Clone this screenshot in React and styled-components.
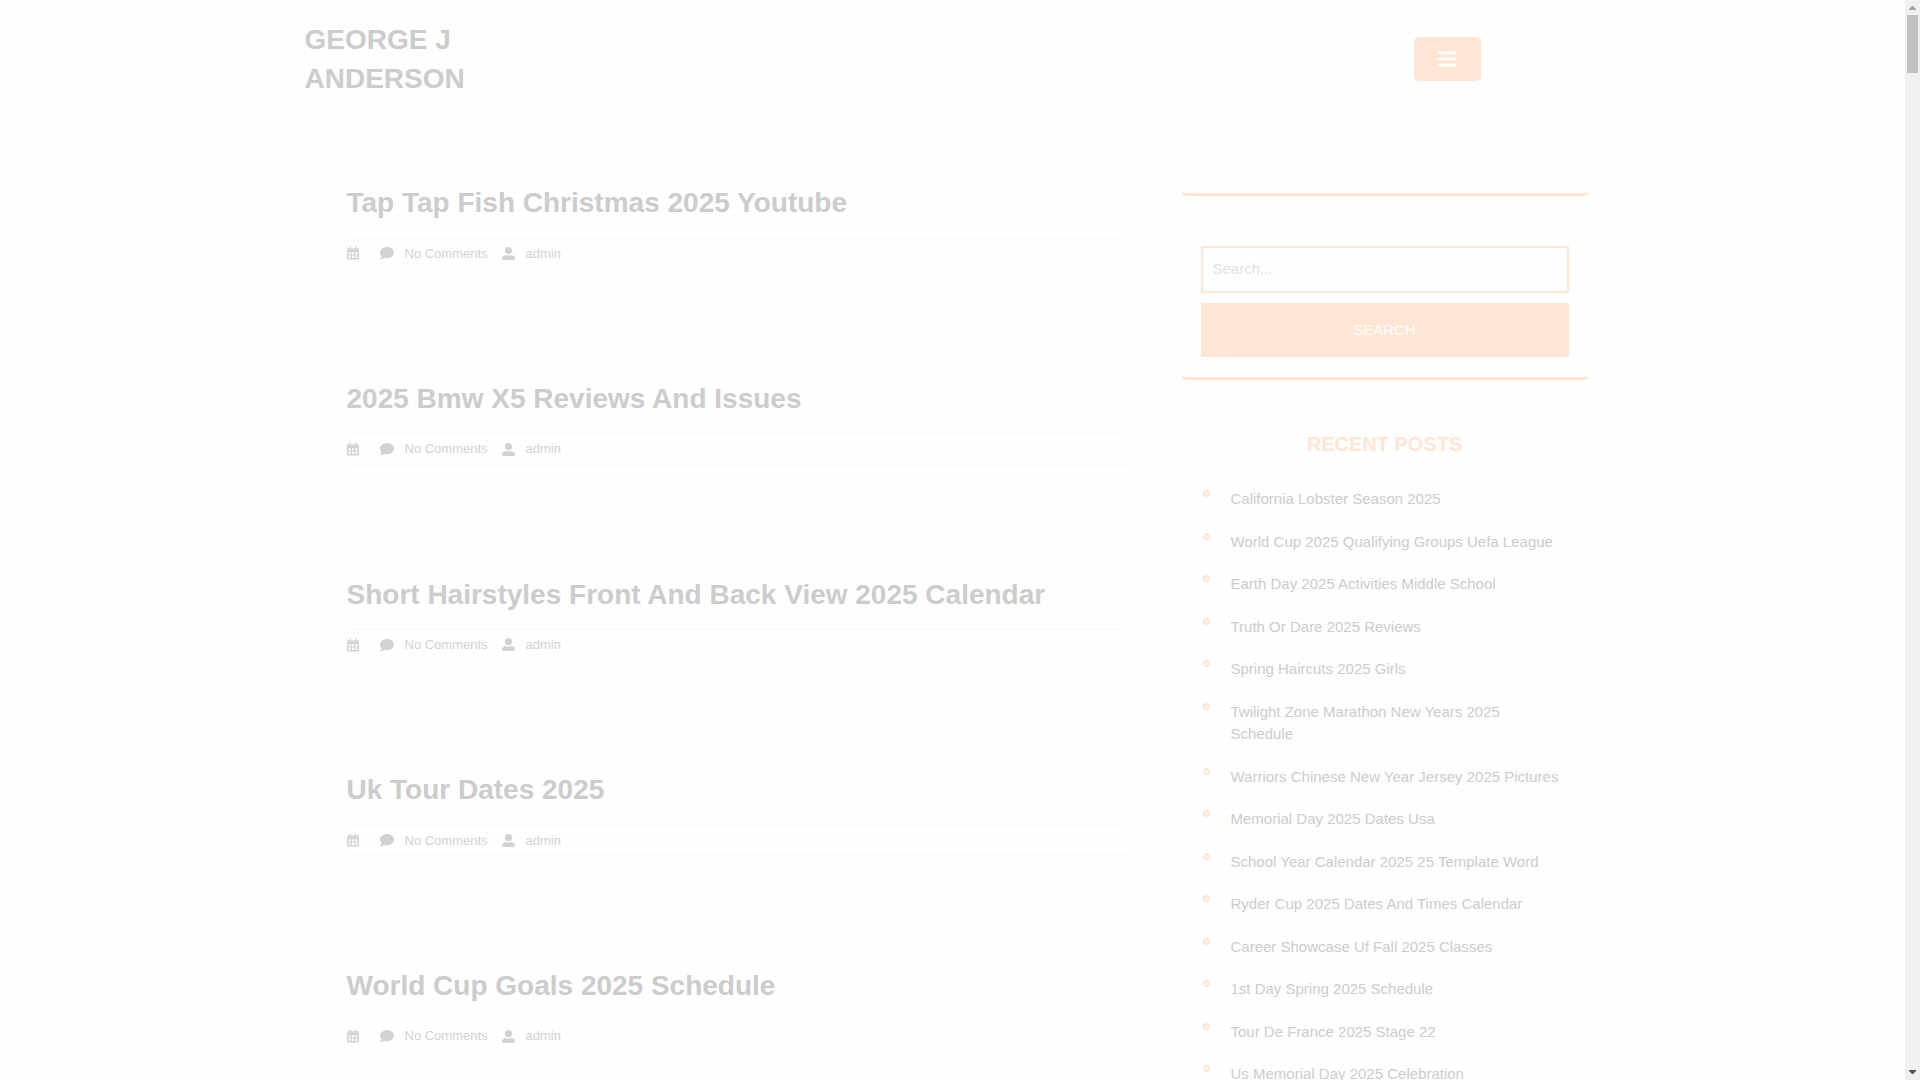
import React from "react";
import styled, { createGlobalStyle } from "styled-components";
import { FaComment, FaUserAlt, FaBars } from "react-icons/fa";

const ink = "#cccccc";
const accent = "#ffe6d4";
const hairline = "#f8f8f8";

const GlobalStyle = createGlobalStyle`
  *, *::before, *::after { box-sizing: border-box; }
  body {
    margin: 0;
    background: #fefefe;
    color: ${ink};
    font: 15px/1.5 "Liberation Sans", Arial, sans-serif;
  }
  a { color: inherit; text-decoration: none; }
  h1, h2, h3, ul { margin: 0; padding: 0; }
`;

const Window = styled.div`
  display: flex;
  height: 100vh;
  overflow: hidden;
`;

const Page = styled.div`
  flex: 1;
  min-width: 0;
`;

const Container = styled.div`
  max-width: 1320px;
  margin: 0 auto;
  padding: 0 12px;
`;

const Header = styled.header`
  display: flex;
  align-items: center;
  justify-content: space-between;
  padding: 20px 120px 20px 0;
`;

const Brand = styled.h1`
  width: 192px;
  font-size: 28px;
  line-height: 1.4;
  font-weight: 700;
  text-transform: uppercase;
`;

const MenuButton = styled.button`
  display: flex;
  align-items: center;
  justify-content: center;
  width: 67px;
  height: 44px;
  padding: 0;
  border: 0;
  border-radius: 5px;
  background: ${accent};
  color: #ffffff;
  font-size: 20px;
`;

const Columns = styled.div`
  display: grid;
  grid-template-columns: 2fr 1fr;
  padding-top: 34px;
`;

const Column = styled.div`
  min-width: 0;
  padding: 0 12px;
`;

const Post = styled.article`
  margin-bottom: 28px;
  padding: 30px 29px 50px;
  border: 1px solid #fbfbfb;
  border-radius: 12px;
`;

const PostTitle = styled.h2`
  padding-bottom: 15px;
  font-size: 28px;
  line-height: 1.4;
  font-weight: 700;
`;

const Meta = styled.div`
  display: flex;
  align-items: center;
  padding: 5px 0;
  border-top: 1px solid ${hairline};
  border-bottom: 1px solid ${hairline};
  color: #d2d2d2;
  font-size: 13px;
`;

const MetaItem = styled.span`
  display: flex;
  align-items: center;
  gap: 11px;
  margin-right: ${(p) => p.$space || 14}px;

  svg {
    display: block;
    flex: none;
    width: ${(p) => p.$icon}px;
    height: ${(p) => p.$icon}px;
  }
`;

const CalendarIcon = () => (
  <svg viewBox="0 0 12 12" fill="currentColor" overflow="visible" aria-hidden="true">
    <path d="M2.6-.8h1.2v3H2.6zM8.2-.8h1.2v3H8.2z" />
    <path opacity=".75" d="M1.2 1h9.6q1.2 0 1.2 1.200V3H0v-.8Q0 1 1.200 1z" />
    <path
      fillRule="evenodd"
      d="M0 3h12v8.300q0 1.200-1.200 1.200H1.200Q0 12.500 0 11.300zM1.500 5.200v2.300h2.200V5.200zM4.900 5.200v2.300h2.200V5.200zM8.300 5.200v2.300h2.200V5.200zM1.500 8.600v2.300h2.200V8.600zM4.900 8.600v2.300h2.200V8.600zM8.300 8.600v2.300h2.200V8.600z"
    />
  </svg>
);

const Widget = styled.section`
  margin-bottom: 29px;
  padding: 20px 19px;
  border: 1px solid #fcfcfc;
  border-bottom: 3px solid ${accent};
  border-radius: 5px;
`;

const SearchForm = styled.form`
  display: flex;
  flex-direction: column;
  gap: 10px;
`;

const SearchInput = styled.input`
  width: 100%;
  height: 47px;
  padding: 0 10px 2px;
  border: 2px solid ${accent};
  border-radius: 0;
  background: #fefefe;
  color: ${ink};
  font: inherit;
  &::placeholder { color: #e2e2e2; opacity: 1; }
`;

const SearchButton = styled.button`
  height: 54px;
  border: 0;
  background: ${accent};
  color: #ffffff;
  font: inherit;
  text-transform: uppercase;
`;

const WidgetTitle = styled.h3`
  padding: 2px 0 22px;
  color: ${accent};
  font-size: 20px;
  line-height: 24px;
  font-weight: 700;
  text-align: center;
  text-transform: uppercase;
`;

const RecentList = styled.ul`
  list-style: none;
`;

const RecentItem = styled.li`
  display: flex;
  align-items: flex-start;
  padding: 10px 8px 10px 2px;

  &::before {
    content: "";
    flex: none;
    width: 7px;
    height: 7px;
    margin: 2px 21px 0 0;
    border: 2px solid ${accent};
    border-radius: 50%;
  }
`;

const ScrollTrack = styled.div`
  display: flex;
  flex-direction: column;
  align-items: center;
  width: 15px;
  padding: 6px 0;
  background: #f0f0f0;
`;

const ScrollThumb = styled.div`
  width: 11px;
  height: 58px;
  margin: 5px 0 auto;
  background: #c1c1c1;
`;

const Arrow = styled.svg`
  display: block;
  width: 7px;
  height: 4px;
  fill: ${(p) => p.$tone};
`;

const posts = [
  "Tap Tap Fish Christmas 2025 Youtube",
  "2025 Bmw X5 Reviews And Issues",
  "Short Hairstyles Front And Back View 2025 Calendar",
  "Uk Tour Dates 2025",
  "World Cup Goals 2025 Schedule",
];

const recent = [
  "California Lobster Season 2025",
  "World Cup 2025 Qualifying Groups Uefa League",
  "Earth Day 2025 Activities Middle School",
  "Truth Or Dare 2025 Reviews",
  "Spring Haircuts 2025 Girls",
  "Twilight Zone Marathon New Years 2025 Schedule",
  "Warriors Chinese New Year Jersey 2025 Pictures",
  "Memorial Day 2025 Dates Usa",
  "School Year Calendar 2025 25 Template Word",
  "Ryder Cup 2025 Dates And Times Calendar",
  "Career Showcase Uf Fall 2025 Classes",
  "1st Day Spring 2025 Schedule",
  "Tour De France 2025 Stage 22",
  "Us Memorial Day 2025 Celebration",
];

export default function App() {
  return (
    <>
      <GlobalStyle />
      <Window>
        <Page>
          <Container>
            <Header>
              <Brand><a href="#home">George J Anderson</a></Brand>
              <MenuButton type="button" aria-label="Open menu"><FaBars /></MenuButton>
            </Header>
            <Columns>
              <Column as="main">
                {posts.map((title) => (
                  <Post key={title}>
                    <PostTitle><a href="#post">{title}</a></PostTitle>
                    <Meta>
                      <MetaItem $icon={12} $space={21}><CalendarIcon /></MetaItem>
                      <MetaItem $icon={14}><FaComment />No Comments</MetaItem>
                      <MetaItem $icon={13}><FaUserAlt /><a href="#author">admin</a></MetaItem>
                    </Meta>
                  </Post>
                ))}
              </Column>
              <Column as="aside">
                <Widget />
                <Widget>
                  <SearchForm role="search" onSubmit={(e) => e.preventDefault()}>
                    <SearchInput type="search" placeholder="Search..." aria-label="Search" />
                    <SearchButton type="submit">Search</SearchButton>
                  </SearchForm>
                </Widget>
                <Widget>
                  <WidgetTitle>Recent Posts</WidgetTitle>
                  <RecentList>
                    {recent.map((title) => (
                      <RecentItem key={title}><a href="#recent">{title}</a></RecentItem>
                    ))}
                  </RecentList>
                </Widget>
              </Column>
            </Columns>
          </Container>
        </Page>
        <ScrollTrack aria-hidden="true">
          <Arrow $tone="#a3a3a3" viewBox="0 0 7 4"><path d="M0 4V3L3 0h1l3 3v1z" /></Arrow>
          <ScrollThumb />
          <Arrow $tone="#505050" viewBox="0 0 7 4"><path d="M0 0v1l3 3h1l3-3V0z" /></Arrow>
        </ScrollTrack>
      </Window>
    </>
  );
}
